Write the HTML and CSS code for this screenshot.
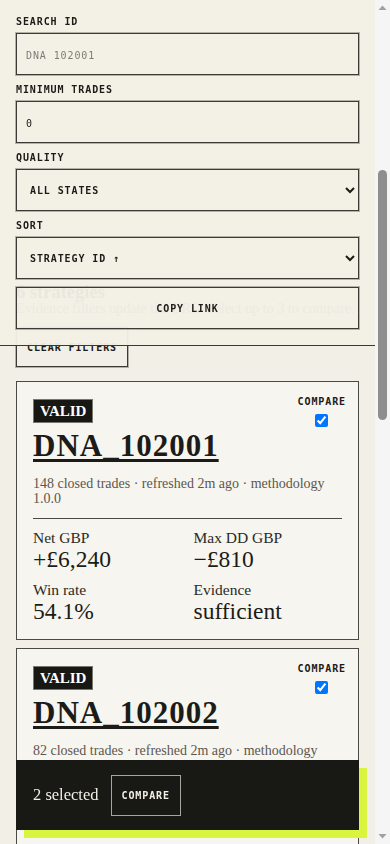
FILE: index.html
```html
<!DOCTYPE html>
<html lang="en">
<head>
  <meta charset="utf-8">
  <title>Strategy DNA</title>
  <link rel="stylesheet" href="styles.css">
</head>
<body>
<div class="app">
  <header class="masthead">
    <p class="kicker">STRATEGY DNA</p>
    <h1>Strategies</h1>
    <p class="lede">Closed-trade evidence for every strategy, refreshed from the ledger.</p>
  </header>

  <section class="filters">
    <label class="field">
      <span class="field-label">SEARCH ID</span>
      <input class="control" type="text" placeholder="DNA_102001">
    </label>
    <label class="field">
      <span class="field-label">MINIMUM TRADES</span>
      <input class="control" type="text" value="0">
    </label>
    <label class="field">
      <span class="field-label">QUALITY</span>
      <select class="control select">
        <option>ALL STATES</option>
        <option>VALID</option>
        <option>INSUFFICIENT</option>
      </select>
    </label>
    <label class="field">
      <span class="field-label">SORT</span>
      <select class="control select">
        <option>STRATEGY ID ↑</option>
        <option>STRATEGY ID ↓</option>
        <option>NET GBP ↓</option>
      </select>
    </label>
    <button class="btn btn-wide">COPY LINK</button>
  </section>

  <main class="results">
    <div class="results-head">
      <h2>6 strategies</h2>
      <p>Evidence filters update the URL. Select up to 3 to compare.</p>
      <button class="btn">CLEAR FILTERS</button>
    </div>

    <div class="card">
      <div class="card-top">
        <span class="badge">VALID</span>
        <label class="pick"><span>COMPARE</span><input type="checkbox" checked></label>
      </div>
      <h3><a href="#">DNA_102001</a></h3>
      <p class="meta">148 closed trades · refreshed 2m ago · methodology 1.0.0</p>
      <div class="stats">
        <div><div class="stat-label">Net GBP</div><div class="stat-value">+£6,240</div></div>
        <div><div class="stat-label">Max DD GBP</div><div class="stat-value">−£810</div></div>
        <div><div class="stat-label">Win rate</div><div class="stat-value">54.1%</div></div>
        <div><div class="stat-label">Evidence</div><div class="stat-value">sufficient</div></div>
      </div>
    </div>

    <div class="card">
      <div class="card-top">
        <span class="badge">VALID</span>
        <label class="pick"><span>COMPARE</span><input type="checkbox" checked></label>
      </div>
      <h3><a href="#">DNA_102002</a></h3>
      <p class="meta">82 closed trades · refreshed 2m ago · methodology 1.0.0</p>
      <div class="stats">
        <div><div class="stat-label">Net GBP</div><div class="stat-value">+£3,115</div></div>
        <div><div class="stat-label">Max DD GBP</div><div class="stat-value">−£1,020</div></div>
        <div><div class="stat-label">Win rate</div><div class="stat-value">51.2%</div></div>
        <div><div class="stat-label">Evidence</div><div class="stat-value">sufficient</div></div>
      </div>
    </div>

    <div class="card">
      <div class="card-top">
        <span class="badge">VALID</span>
        <label class="pick"><span>COMPARE</span><input type="checkbox"></label>
      </div>
      <h3><a href="#">DNA_102003</a></h3>
      <p class="meta">64 closed trades · refreshed 5m ago · methodology 1.0.0</p>
      <div class="stats">
        <div><div class="stat-label">Net GBP</div><div class="stat-value">+£1,480</div></div>
        <div><div class="stat-label">Max DD GBP</div><div class="stat-value">−£640</div></div>
        <div><div class="stat-label">Win rate</div><div class="stat-value">49.8%</div></div>
        <div><div class="stat-label">Evidence</div><div class="stat-value">sufficient</div></div>
      </div>
    </div>

    <div class="card">
      <div class="card-top">
        <span class="badge">VALID</span>
        <label class="pick"><span>COMPARE</span><input type="checkbox"></label>
      </div>
      <h3><a href="#">DNA_102004</a></h3>
      <p class="meta">41 closed trades · refreshed 5m ago · methodology 1.0.0</p>
      <div class="stats">
        <div><div class="stat-label">Net GBP</div><div class="stat-value">−£220</div></div>
        <div><div class="stat-label">Max DD GBP</div><div class="stat-value">−£910</div></div>
        <div><div class="stat-label">Win rate</div><div class="stat-value">46.3%</div></div>
        <div><div class="stat-label">Evidence</div><div class="stat-value">limited</div></div>
      </div>
    </div>

    <div class="card">
      <div class="card-top">
        <span class="badge">VALID</span>
        <label class="pick"><span>COMPARE</span><input type="checkbox"></label>
      </div>
      <h3><a href="#">DNA_102005</a></h3>
      <p class="meta">37 closed trades · refreshed 9m ago · methodology 1.0.0</p>
      <div class="stats">
        <div><div class="stat-label">Net GBP</div><div class="stat-value">+£905</div></div>
        <div><div class="stat-label">Max DD GBP</div><div class="stat-value">−£450</div></div>
        <div><div class="stat-label">Win rate</div><div class="stat-value">52.7%</div></div>
        <div><div class="stat-label">Evidence</div><div class="stat-value">limited</div></div>
      </div>
    </div>

    <div class="card">
      <div class="card-top">
        <span class="badge">VALID</span>
        <label class="pick"><span>COMPARE</span><input type="checkbox"></label>
      </div>
      <h3><a href="#">DNA_102006</a></h3>
      <p class="meta">29 closed trades · refreshed 9m ago · methodology 1.0.0</p>
      <div class="stats">
        <div><div class="stat-label">Net GBP</div><div class="stat-value">+£310</div></div>
        <div><div class="stat-label">Max DD GBP</div><div class="stat-value">−£380</div></div>
        <div><div class="stat-label">Win rate</div><div class="stat-value">50.0%</div></div>
        <div><div class="stat-label">Evidence</div><div class="stat-value">limited</div></div>
      </div>
    </div>
  </main>

  <div class="compare-bar">
    <span class="count">2 selected</span>
    <button class="btn btn-dark">COMPARE</button>
  </div>
</div>

<div class="rail" aria-hidden="true">
  <svg class="rail-btn" width="15" height="15" viewBox="0 0 15 15"><polygon points="3.5,10 11.5,10 7.5,5.5" fill="#a0a0a0"/></svg>
  <span class="rail-thumb"></span>
  <svg class="rail-btn rail-end" width="15" height="15" viewBox="0 0 15 15"><polygon points="3.5,5 11.5,5 7.5,9.5" fill="#a0a0a0"/></svg>
</div>
<script src="script.js"></script>
</body>
</html>
```

FILE: styles.css
```css
html, body { margin: 0; height: 100%; overflow: hidden; background: #f2efe6; }
body { display: flex; color: #1b1b17; font-family: "Liberation Serif", serif; }
.app { flex: 1; min-width: 0; height: 100vh; overflow-y: auto; }

.rail { flex: none; width: 15px; height: 100vh; display: flex; flex-direction: column; background: #f5f5f5; }
.rail-btn { flex: none; display: block; }
.rail-end { margin-top: auto; }
.rail-thumb { flex: none; width: 9px; height: 250px; margin: 155px 3px 0; border-radius: 5px; background: #8e8e8e; }

.masthead { height: 449px; box-sizing: border-box; padding: 40px 16px; }
.masthead h1 { margin: 8px 0; font-size: 40px; }
.kicker { margin: 0; font: bold 10px/12px "DejaVu Sans Mono", monospace; letter-spacing: 0.09em; }
.lede { margin: 0; font-size: 15px; color: #5b5750; }

.filters { position: sticky; top: 0; z-index: 5; display: flex; flex-direction: column; gap: 8px; padding: 15px 16px 16px; background: rgba(242, 239, 230, 0.96); border-bottom: 1px solid #3a3a35; }
.field { display: flex; flex-direction: column; gap: 4px; }
.field-label { font: bold 10px/14px "DejaVu Sans Mono", monospace; letter-spacing: 0.09em; color: #1b1b17; }
.control { box-sizing: border-box; height: 42px; width: 100%; margin: 0; padding: 2px 9px 0; border: 1px solid #3b3b36; border-radius: 0; background: transparent; color: #1b1b17; font: 10px/20px "DejaVu Sans Mono", monospace; letter-spacing: 0.09em; outline: 1px solid rgba(60, 60, 55, 0.35); outline-offset: 0; }
.control::placeholder { color: #7f7c75; line-height: 20px; }
.select { font-weight: bold; padding-top: 0; }

.btn { box-sizing: border-box; height: 42px; padding: 0 10px; border: 1px solid #3b3b36; border-radius: 0; background: transparent; color: #1b1b17; font: bold 10px "DejaVu Sans Mono", monospace; letter-spacing: 0.09em; outline: 1px solid rgba(60, 60, 55, 0.35); }
.btn-wide { width: 100%; }

.results { padding: 12px 16px 166px; display: flex; flex-direction: column; gap: 8px; }
.results-head { margin-bottom: 6px; }
.results-head h2 { margin: 0; font-size: 18.5px; line-height: 16px; }
.results-head p { margin: 0; font-size: 14.2px; line-height: 16px; color: #5b5750; }
.results-head .btn { margin-top: 11px; height: 40px; }

.card { background: #f7f5ef; border: 1px solid #4a4a45; padding: 16px; }
.card-top { display: flex; justify-content: space-between; align-items: flex-start; height: 30px; }
.badge { margin-top: 1px; padding: 2px 6px; background: #171713; border: 1px solid #77776f; color: #fff; font-size: 15px; line-height: 18px; font-weight: bold; }
.pick { display: flex; flex-direction: column; align-items: center; margin-right: -4px; margin-top: -2px; font: bold 10px/12px "DejaVu Sans Mono", monospace; letter-spacing: 0.09em; }
.pick input { margin: 6px 0 0; width: 13px; height: 13px; }
.card h3 { margin: 0 0 12px; font-size: 31px; line-height: 36px; letter-spacing: 1px; }
.card h3 a { color: #1b1b17; text-decoration-thickness: 3px; text-underline-offset: 3px; }
.meta { margin: 0; padding-bottom: 12px; border-bottom: 1px solid #4a4a45; font-size: 14px; line-height: 15px; color: #5b5750; }
.stats { display: grid; grid-template-columns: 1fr 1fr; column-gap: 12px; row-gap: 10px; padding-top: 10px; }
.stat-label { font-size: 15.5px; line-height: 18px; color: #2a2a26; }
.stat-value { font-size: 23.5px; line-height: 24px; color: #1b1b17; }

.compare-bar { position: sticky; bottom: 14px; z-index: 10; display: flex; align-items: center; gap: 12px; height: 70px; box-sizing: border-box; margin: 0 16px 14px; padding: 0 17px; background: #181915; box-shadow: 8px 8px 0 #d9f53e; }
.count { color: #f2efe6; font-size: 16.5px; }
.btn-dark { height: 41px; color: #f2efe6; border-color: #a8a59d; outline: none; }
```

FILE: script.js
```js
document.querySelector('.app').scrollTop = 523;
```
